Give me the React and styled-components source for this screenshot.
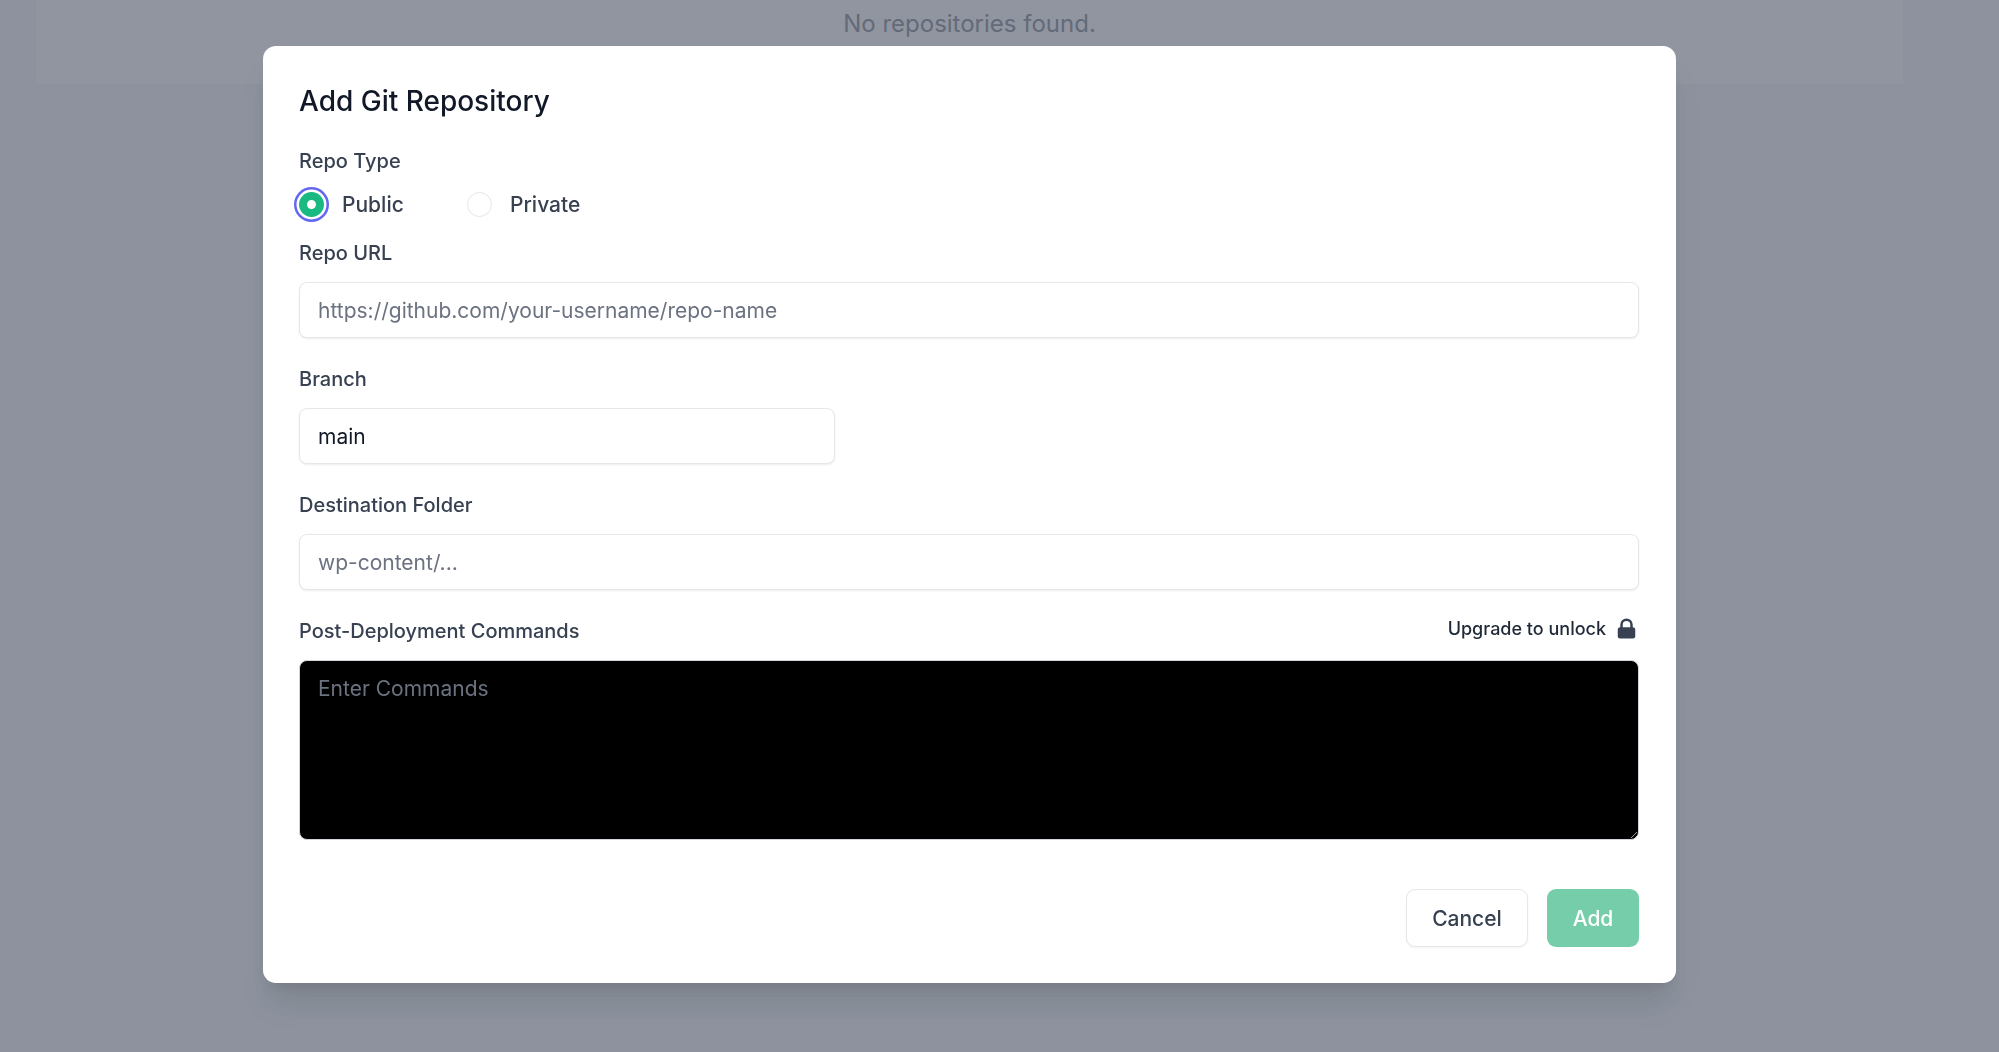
import React from 'react';
import styled, { createGlobalStyle } from 'styled-components';
import { HiLockClosed } from 'react-icons/hi';

const GlobalStyle = createGlobalStyle`
    * {
        box-sizing: border-box;
    }
    html, body {
        margin: 0;
        height: 100%;
        font-family: Inter, "Liberation Sans", sans-serif;
    }
`;

const App = () => {
    return (
        <Page>
            <GlobalStyle />
            <Panel>
                <EmptyText>No repositories found.</EmptyText>
            </Panel>
            <Overlay>
                <Modal>
                    <Title>Add Git Repository</Title>
                    <TypeField>
                        <Label>Repo Type</Label>
                        <RadioRow>
                            <RadioOption>
                                <Radio type="radio" name="repoType" defaultChecked $focused />
                                <span>Public</span>
                            </RadioOption>
                            <RadioOption>
                                <Radio type="radio" name="repoType" />
                                <span>Private</span>
                            </RadioOption>
                        </RadioRow>
                    </TypeField>
                    <Field>
                        <Label>Repo URL</Label>
                        <Input placeholder="https://github.com/your-username/repo-name" />
                    </Field>
                    <Field>
                        <Label>Branch</Label>
                        <Input defaultValue="main" $width="536px" />
                    </Field>
                    <Field>
                        <Label>Destination Folder</Label>
                        <Input placeholder="wp-content/..." />
                    </Field>
                    <Field>
                        <LabelRow>
                            <Label>Post-Deployment Commands</Label>
                            <Upgrade>
                                Upgrade to unlock
                                <HiLockClosed size={25} color="#374151" />
                            </Upgrade>
                        </LabelRow>
                        <Commands placeholder="Enter Commands" />
                    </Field>
                    <Footer>
                        <CancelButton>Cancel</CancelButton>
                        <AddButton>Add</AddButton>
                    </Footer>
                </Modal>
            </Overlay>
        </Page>
    )
}

const Page = styled.div`
    min-height: 100vh;
    padding: 0 96px 0 36px;
    background: #f3f4f6;
`;

const Panel = styled.div`
    height: 84px;
    background: #fff;
    text-align: center;
`;

const EmptyText = styled.p`
    margin: 0;
    font-size: 24px;
    line-height: 48px;
    color: #4b5563;
`;

const Overlay = styled.div`
    position: fixed;
    inset: 0;
    padding: 46px 0 0 263px;
    background: rgba(107, 114, 128, 0.75);
`;

const Modal = styled.div`
    width: 1413px;
    padding: 36px 37px 36px 36px;
    background: #fff;
    border-radius: 13px;
    box-shadow: 0 25px 32px -6px rgba(0, 0, 0, 0.1), 0 10px 13px -7px rgba(0, 0, 0, 0.1);
`;

const Title = styled.h2`
    margin: 0 0 30px;
    font-size: 28px;
    line-height: 38px;
    font-weight: 500;
    color: #111827;
`;

const Field = styled.div`
    margin-bottom: 30px;
`;

const TypeField = styled.div`
    margin-bottom: 20px;
`;

const Label = styled.label`
    display: block;
    margin-bottom: 17px;
    font-size: 20px;
    line-height: 23px;
    font-weight: 500;
    color: #374151;
`;

const LabelRow = styled.div`
    display: flex;
    justify-content: space-between;
`;

const Upgrade = styled.div`
    display: flex;
    align-items: center;
    gap: 8px;
    height: 23px;
    margin-top: -3px;
    font-size: 18px;
    font-weight: 500;
    color: #1f2937;
`;

const RadioRow = styled.div`
    display: flex;
    height: 36px;
    margin-top: -4px;
`;

const RadioOption = styled.div`
    display: flex;
    align-items: center;
    gap: 18px;
    width: 168px;
    font-size: 21px;
    font-weight: 500;
    color: #374151;
`;

const Radio = styled.input`
    appearance: none;
    flex: none;
    width: 25px;
    height: 25px;
    margin: 0;
    border: 1px solid #e5e7eb;
    border-radius: 50%;
    background: #fff;

    &:checked {
        border: 8px solid #1ab981;
    }

    ${props => props.$focused && `
        box-shadow: 0 0 0 2.5px #fff, 0 0 0 5px #6366f1;
    `}
`;

const Input = styled.input`
    display: block;
    width: ${props => props.$width || '100%'};
    height: 56px;
    padding: 0 18px;
    border: 1px solid #e5e7eb;
    border-radius: 8px;
    box-shadow: 0 1px 2px rgba(0, 0, 0, 0.08);
    background: #fff;
    font-family: inherit;
    font-size: 21px;
    color: #111827;
    outline: none;

    &::placeholder {
        color: #6b7280;
        opacity: 1;
    }
`;

const Commands = styled.textarea`
    display: block;
    width: 100%;
    height: 180px;
    padding: 13px 18px;
    border: 1px solid #d1d5db;
    border-radius: 8px;
    background: #000;
    font-family: inherit;
    font-size: 21px;
    line-height: 30px;
    color: #fff;
    outline: none;
    resize: vertical;

    &::placeholder {
        color: #6b7280;
        opacity: 1;
    }
`;

const Footer = styled.div`
    display: flex;
    justify-content: flex-end;
    gap: 19px;
    margin-top: 49px;
`;

const CancelButton = styled.button`
    width: 122px;
    height: 58px;
    border: 1px solid #e5e7eb;
    border-radius: 9px;
    box-shadow: 0 1px 2px rgba(0, 0, 0, 0.05);
    background: #fff;
    font-family: inherit;
    font-size: 21px;
    font-weight: 500;
    color: #374151;
`;

const AddButton = styled.button`
    width: 92px;
    height: 58px;
    border: none;
    border-radius: 9px;
    background: #75cea9;
    font-family: inherit;
    font-size: 21px;
    font-weight: 500;
    color: #fff;
`;

export default App
